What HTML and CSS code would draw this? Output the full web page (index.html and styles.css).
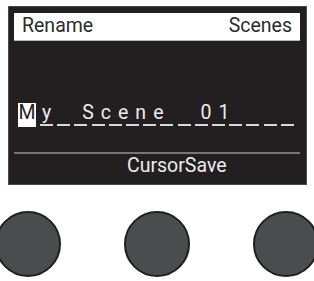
FILE: index.html
```html
<!DOCTYPE html>
<html>
<head>
<meta charset="utf-8">
<link rel="stylesheet" href="styles.css">
</head>
<body>
<div class="screen">
  <div class="header">
    <span class="title">Rename</span>
    <span class="title">Scenes</span>
  </div>
  <div class="field">
    <span class="cursor">M</span>
    <div class="rest">
      <div class="chars">
        <span class="word">y</span>
        <span class="word scene">Scene</span>
        <span class="word num">01</span>
      </div>
      <div class="dashes">
        <i></i><i></i><i></i><i></i><i></i><i></i><i></i><i></i><i></i><i></i><i></i><i></i><i></i><i></i><i></i>
      </div>
    </div>
  </div>
  <div class="divider"></div>
  <div class="softkeys">CursorSave</div>
</div>
<div class="knobs">
  <div class="knob"></div>
  <div class="knob"></div>
  <div class="knob"></div>
</div>
</body>
</html>
```
FILE: styles.css
```css
html, body {
  margin: 0;
  padding: 0;
  background: #ffffff;
}
body {
  width: 314px;
  height: 281px;
  overflow: hidden;
  font-family: Roboto, "Liberation Sans", sans-serif;
}
.screen {
  box-sizing: border-box;
  width: 299px;
  height: 179px;
  margin: 6px 0 0 8px;
  padding: 6px 6px 0 5px;
  background: #231f20;
  border: 1px solid #4a4a4a;
}
.header {
  display: flex;
  justify-content: space-between;
  box-sizing: border-box;
  height: 28px;
  padding: 0 8px 0 8px;
  background: #ffffff;
  border-bottom: 1px solid #b9b9b9;
}
.title {
  font-size: 19.5px;
  line-height: 25px;
  color: #2b2b2b;
}
.field {
  display: flex;
  align-items: flex-start;
  margin-top: 62px;
  padding-left: 4px;
}
.cursor {
  box-sizing: border-box;
  width: 18px;
  height: 24px;
  background: #ffffff;
  color: #231f20;
  font-size: 19.5px;
  line-height: 19px;
  text-align: center;
}
.rest {
  display: flex;
  flex-direction: column;
  width: 258px;
}
.chars {
  display: flex;
  height: 21px;
  color: #ececec;
  font-size: 19.5px;
  line-height: 19px;
  letter-spacing: 7px;
  white-space: pre;
}
.word:first-child {
  margin-left: 6px;
}
.scene {
  margin-left: 24px;
}
.num {
  margin-left: 30px;
}
.dashes {
  display: flex;
  justify-content: space-between;
  margin-left: 4px;
  width: 254px;
}
.dashes i {
  display: block;
  width: 13px;
  height: 2px;
  background: #d8d8d8;
}
.divider {
  height: 2px;
  margin-top: 25px;
  background: #767676;
}
.softkeys {
  padding-left: 113px;
  font-size: 19.5px;
  line-height: 22px;
  color: #ececec;
  margin-top: 1px;
}
.knobs {
  display: flex;
  justify-content: space-between;
  width: 324px;
  margin: 26px 0 0 -5px;
}
.knob {
  box-sizing: border-box;
  width: 66px;
  height: 66px;
  border-radius: 50%;
  background: #4b4c4e;
  border: 2px solid #1f1f1f;
}
```
